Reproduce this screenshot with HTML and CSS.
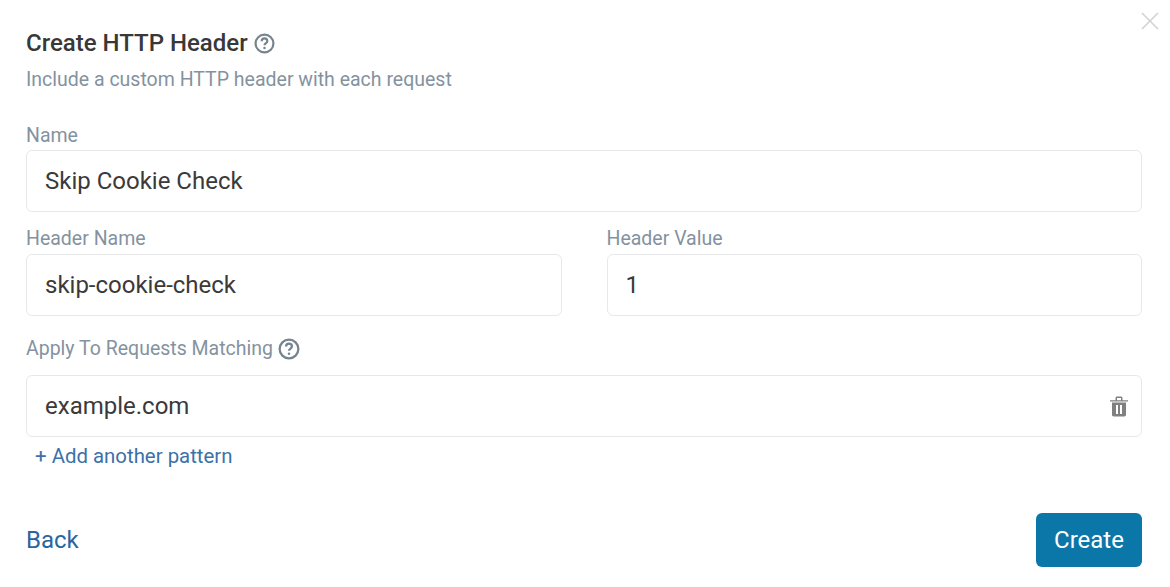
FILE: index.html
```html
<!DOCTYPE html>
<html>
  <head>
    <meta charset="UTF-8">
    <title>Create HTTP Header</title>
    <link rel="stylesheet" href="styles.css">
  </head>
  <body>
    <div class="modal">
      <svg class="close" viewBox="0 0 18 18" width="18" height="18">
        <path d="M1 1L17 17M17 1L1 17" />
      </svg>
      <h1 class="title">Create HTTP Header
        <svg class="help help-title" viewBox="0 0 24 24" width="21" height="21">
          <circle cx="12" cy="12" r="10.2" />
          <path d="M8.8 9.4a3.2 3.2 0 0 1 6.4 0c0 2.1-3.2 2.4-3.2 4.6" />
          <circle class="dot" cx="12" cy="17.2" r="1.4" />
        </svg>
      </h1>
      <p class="subtitle">Include a custom HTTP header with each request</p>

      <div class="label label-first">Name</div>
      <div class="input">Skip Cookie Check</div>

      <div class="row">
        <div class="col">
          <div class="label">Header Name</div>
          <div class="input">skip-cookie-check</div>
        </div>
        <div class="col">
          <div class="label">Header Value</div>
          <div class="input">1</div>
        </div>
      </div>

      <div class="label label-apply">Apply To Requests Matching
        <svg class="help" viewBox="0 0 24 24" width="22" height="22">
          <circle cx="12" cy="12" r="10.2" />
          <path d="M8.8 9.4a3.2 3.2 0 0 1 6.4 0c0 2.1-3.2 2.4-3.2 4.6" />
          <circle class="dot" cx="12" cy="17.2" r="1.4" />
        </svg>
      </div>
      <div class="input input-pattern">
        <span>example.com</span>
        <svg class="trash" viewBox="0 0 20 22" width="20" height="22">
          <path d="M1 5.2h18v1.4H1zM6.5 5.5V3.2c0-1 .7-1.7 1.7-1.7h3.6c1 0 1.7.7 1.7 1.7v2.3h-1.5V3H8v2.5z" />
          <path fill-rule="evenodd" d="M3 7.5h14v12.3c0 1-.7 1.7-1.7 1.7H4.700c-1 0-1.700-.7-1.700-1.700zM7 10v9h2v-9zM11 10v9h2v-9z" />
        </svg>
      </div>
      <a href="#" class="add-link">+ Add another pattern</a>

      <div class="footer">
        <a href="#" class="back">Back</a>
        <button class="create">Create</button>
      </div>
    </div>
  </body>
</html>
```

FILE: styles.css
```css
body {
  margin: 0;
  background: #fff;
  font-family: Roboto, "Liberation Sans", sans-serif;
}

.modal {
  position: relative;
  height: 587px;
  box-sizing: border-box;
  padding: 28px 28px 0 26px;
}

.close {
  position: absolute;
  top: 12px;
  left: 1141px;
}
.close path {
  stroke: #d2d2d2;
  stroke-width: 1.6;
  fill: none;
}

.title {
  display: flex;
  align-items: center;
  gap: 6px;
  margin: 0;
  height: 30px;
  font-size: 24px;
  font-weight: 500;
  color: #383838;
}

.subtitle {
  margin: 9px 0 0;
  line-height: 26px;
  font-size: 19.5px;
  color: #84929f;
}

.help {
  flex: none;
}
.help circle,
.help path {
  fill: none;
  stroke: #76848f;
  stroke-width: 2.5;
}
.help .dot {
  fill: #76848f;
  stroke: none;
}

.label {
  height: 26px;
  line-height: 26px;
  padding-top: 1px;
  margin-bottom: 2px;
  font-size: 19.5px;
  color: #84929f;
}
.label-first {
  margin-top: 29px;
  margin-bottom: 1px;
}
.label-apply {
  display: flex;
  align-items: center;
  gap: 5px;
  margin-top: 19px;
  margin-bottom: 13px;
}

.input {
  display: flex;
  align-items: center;
  justify-content: space-between;
  box-sizing: border-box;
  height: 62px;
  padding: 0 12px 0 18px;
  border: 1px solid #e6e8ea;
  border-radius: 6px;
  font-size: 24px;
  color: #3a3a3a;
}

.row {
  display: flex;
  gap: 45px;
  margin-top: 13px;
}
.col {
  flex: 1;
}

.trash {
  fill: #808080;
}

.add-link {
  display: block;
  margin: 6px 0 0 9px;
  line-height: 26px;
  font-size: 20.4px;
  color: #3b71a8;
  text-decoration: none;
}

.footer {
  display: flex;
  align-items: center;
  justify-content: space-between;
  margin-top: 44px;
}

.back {
  font-size: 24px;
  color: #2c649f;
  text-decoration: none;
}

.create {
  width: 106px;
  height: 54px;
  padding: 0;
  border: none;
  border-radius: 6px;
  background: #0b76a8;
  color: #fff;
  font-family: inherit;
  font-size: 24px;
}
```
